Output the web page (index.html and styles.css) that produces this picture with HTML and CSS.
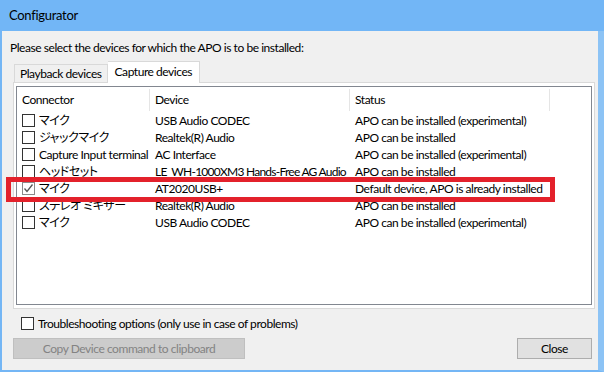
FILE: index.html
```html
<!DOCTYPE html>
<html lang="en">
<head>
    <meta charset="UTF-8">
    <title>Configurator</title>
    <link rel="stylesheet" href="styles.css">
</head>
<body>
    <div class="window">
        <div class="titlebar">Configurator</div>
        <div class="client">
            <p class="prompt">Please select the devices for which the APO is to be installed:</p>

            <div class="tabs">
                <div class="tab">Playback devices</div>
                <div class="tab active">Capture devices</div>
            </div>

            <div class="panel">
                <div class="list">
                    <div class="row head">
                        <div class="cell">Connector</div>
                        <div class="cell">Device</div>
                        <div class="cell">Status</div>
                        <div class="cell"></div>
                    </div>
                    <div class="row">
                        <div class="cell conn"><span class="box"></span>マイク</div>
                        <div class="cell">USB Audio CODEC</div>
                        <div class="cell">APO can be installed (experimental)</div>
                    </div>
                    <div class="row">
                        <div class="cell conn"><span class="box"></span>ジャックマイク</div>
                        <div class="cell">Realtek(R) Audio</div>
                        <div class="cell">APO can be installed</div>
                    </div>
                    <div class="row">
                        <div class="cell conn"><span class="box"></span>Capture Input terminal</div>
                        <div class="cell">AC Interface</div>
                        <div class="cell">APO can be installed (experimental)</div>
                    </div>
                    <div class="row">
                        <div class="cell conn"><span class="box"></span>ヘッドセット</div>
                        <div class="cell fit">LE_WH-1000XM3 Hands-Free AG Audio</div>
                        <div class="cell">APO can be installed</div>
                    </div>
                    <div class="row">
                        <div class="cell conn"><span class="box checked"><svg width="11" height="11" viewBox="0 0 11 11"><path d="M1.5 5.5 L4 8.5 L9.5 1.5" fill="none" stroke="#555" stroke-width="1.3"/></svg></span>マイク</div>
                        <div class="cell">AT2020USB+</div>
                        <div class="cell">Default device, APO is already installed</div>
                    </div>
                    <div class="row">
                        <div class="cell conn"><span class="box"></span>ステレオ ミキサー</div>
                        <div class="cell">Realtek(R) Audio</div>
                        <div class="cell">APO can be installed</div>
                    </div>
                    <div class="row">
                        <div class="cell conn"><span class="box"></span>マイク</div>
                        <div class="cell">USB Audio CODEC</div>
                        <div class="cell">APO can be installed (experimental)</div>
                    </div>
                </div>
            </div>

            <div class="trouble"><span class="box"></span>Troubleshooting options (only use in case of problems)</div>

            <div class="buttons">
                <button class="btn copy" disabled>Copy Device command to clipboard</button>
                <button class="btn close">Close</button>
            </div>
        </div>
        <div class="highlight"></div>
    </div>
</body>
</html>
```

FILE: styles.css
```css
body {
    margin: 0;
    font-family: Lato, "Noto Sans CJK JP", sans-serif;
    font-size: 12px;
    letter-spacing: -0.45px;
    font-feature-settings: "palt";
    color: #000;
}
.window {
    position: relative;
    width: 604px;
    height: 372px;
    box-sizing: border-box;
    background: #f0f0f0;
    border-left: 2px solid #74b6f5;
    border-right: 6px solid #8cc3f5;
    border-bottom: 2px solid #74b6f5;
    display: flex;
    flex-direction: column;
}
.titlebar {
    height: 31px;
    line-height: 31px;
    margin-left: -2px;
    margin-right: -6px;
    padding-left: 9px;
    background: #72b6f6;
    font-size: 13px;
    letter-spacing: -0.3px;
}
.client {
    flex: 1;
    display: flex;
    flex-direction: column;
    padding: 0 3px 0 11px;
}
.prompt {
    margin: 9px 0 0 -3px;
    line-height: 15px;
}
.tabs {
    display: flex;
    align-items: flex-end;
    margin-top: 6px;
    height: 21px;
    padding-left: 1px;
}
.tab {
    height: 18px;
    line-height: 17px;
    padding: 0 5px;
    border: 1px solid #d9d9d9;
    border-bottom: none;
    box-sizing: border-box;
}
.tab.active {
    height: 22px;
    line-height: 20px;
    padding: 0 7px;
    background: #fff;
    border-left: none;
    margin-bottom: -1px;
    position: relative;
    z-index: 1;
}
.panel {
    background: #fff;
    border: 1px solid #d9d9d9;
    padding: 3px 2px;
    height: 227px;
    box-sizing: border-box;
}
.list {
    border: 1px solid #828790;
    height: 100%;
    box-sizing: border-box;
    background: #fff;
}
.row {
    display: grid;
    grid-template-columns: 133px 200px 200px 1fr;
    height: 17px;
    line-height: 17px;
}
.row.head {
    height: 25px;
}
.row.head .cell {
    border-right: 1px solid #e5e5e5;
    margin: 2px 0 1px;
    line-height: 22px;
}
.row.head .cell:last-child {
    border-right: none;
}
.cell {
    padding-left: 5px;
    white-space: nowrap;
    overflow: hidden;
}
.cell.fit {
    letter-spacing: -0.75px;
    overflow: visible;
}
.cell.conn {
    display: flex;
    align-items: center;
    padding-left: 5px;
}
.box {
    width: 13px;
    height: 13px;
    box-sizing: border-box;
    border: 1px solid #333;
    background: #fff;
    margin-right: 4px;
    flex: none;
    display: inline-flex;
    align-items: center;
    justify-content: center;
}
.box.checked {
    border-color: #8a8a8a;
}
.trouble {
    display: flex;
    align-items: center;
    margin-top: 7px;
    padding-left: 8px;
    height: 14px;
}
.buttons {
    display: flex;
    justify-content: space-between;
    margin-top: 8px;
    padding-right: 3px;
}
.btn {
    font-family: inherit;
    font-size: 12px;
    letter-spacing: -0.45px;
    height: 21px;
    padding: 0;
    border: 1px solid #adadad;
    background: #e1e1e1;
    color: #000;
}
.btn.copy {
    width: 232px;
    background: #cccccc;
    border-color: #bfbfbf;
    color: #838383;
}
.btn.close {
    width: 75px;
}
.highlight {
    position: absolute;
    left: 4px;
    top: 177px;
    width: 549px;
    height: 25px;
    box-sizing: border-box;
    border: 5px solid #e3212b;
}
```
